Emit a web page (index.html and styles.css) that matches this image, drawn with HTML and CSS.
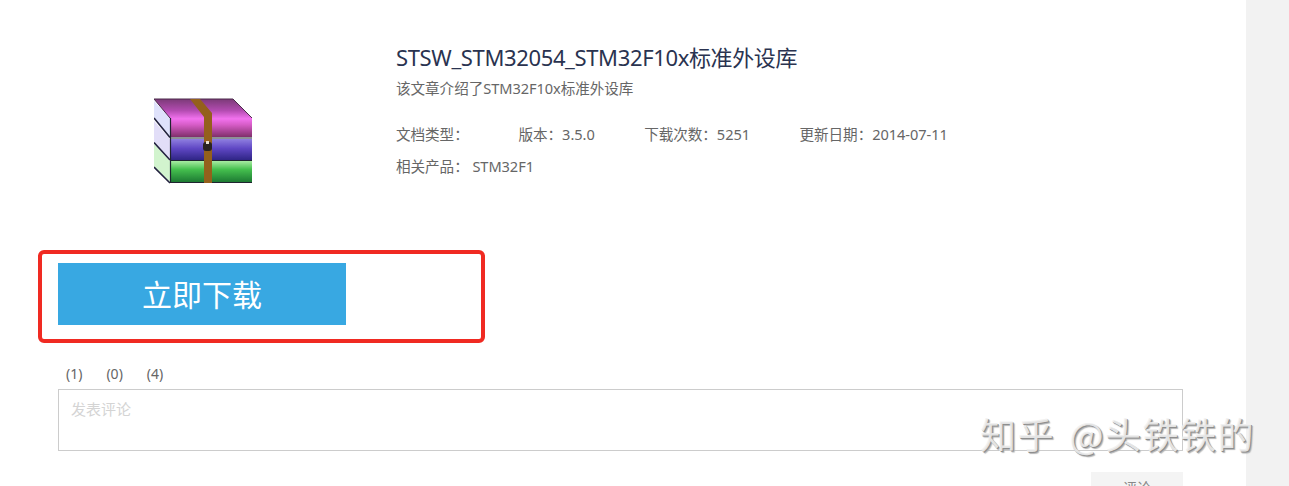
FILE: index.html
```html
<!DOCTYPE html>
<html lang="zh-CN">
<head>
<meta charset="utf-8">
<title>STSW_STM32054</title>
<link rel="stylesheet" href="styles.css">
</head>
<body>
<div class="page">
  <main class="main">
    <section class="head">
      <div class="thumb">
        <svg class="rar" width="100" height="88" viewBox="0 0 100 88" aria-hidden="true">
          <defs>
            <linearGradient id="mag" x1="0" y1="0" x2="0" y2="1">
              <stop offset="0" stop-color="#7c3a78"/>
              <stop offset="0.3" stop-color="#b24bb0"/>
              <stop offset="0.52" stop-color="#f272ee"/>
              <stop offset="0.68" stop-color="#d65cc6"/>
              <stop offset="1" stop-color="#7f2f6b"/>
            </linearGradient>
            <linearGradient id="pur" x1="0" y1="0" x2="0" y2="1">
              <stop offset="0" stop-color="#8f7fe0"/>
              <stop offset="0.45" stop-color="#5f47c4"/>
              <stop offset="1" stop-color="#2f2585"/>
            </linearGradient>
            <linearGradient id="grn" x1="0" y1="0" x2="0" y2="1">
              <stop offset="0" stop-color="#a8eca2"/>
              <stop offset="0.4" stop-color="#45c04e"/>
              <stop offset="1" stop-color="#1d7a33"/>
            </linearGradient>
          </defs>
          <path d="M0 3 L16 20 V39 L0 20Z" fill="#dfe2fb"/>
          <path d="M0 23 L16 41 V61 L0 44Z" fill="#e2def8"/>
          <path d="M0 46 L16 63 V84 L0 69Z" fill="#d2f4ce"/>
          <path d="M0 20 L16 39.5 M0 44.5 L16 62 M0 69 L16 85" stroke="#23233f" stroke-width="1.6" fill="none"/>
          <path d="M0 1 H79 L98 20 V39 H16 V20Z" fill="url(#mag)"/>
          <path d="M0 1 H79 L98 20 M0 1 L16 20" stroke="#4a2b4a" stroke-width="1" fill="none"/>
          <rect x="16" y="41" width="82" height="21" fill="url(#pur)"/>
          <rect x="16" y="63" width="82" height="21" fill="url(#grn)"/>
          <path d="M16 40 H98 M16 62.5 H98 M16 84.5 H98 M16.5 20 V85" stroke="#1f2430" stroke-width="1.2" fill="none"/>
          <path d="M36 1 H46 L58 15 V85 H50 V19Z" fill="#94601c"/>
          <rect x="49" y="44" width="9" height="9" rx="3" fill="#2a2420"/>
          <rect x="52" y="43" width="3" height="3" fill="#e8e0d0"/>
        </svg>
      </div>
      <div class="info">
        <h1 class="title">STSW_STM32054_STM32F10x标准外设库</h1>
        <p class="desc">该文章介绍了STM32F10x标准外设库</p>
        <div class="meta">
          <span class="meta-type">文档类型：</span>
          <span>版本：3.5.0</span>
          <span>下载次数：5251</span>
          <span>更新日期：2014-07-11</span>
        </div>
        <div class="meta meta-second">
          <span>相关产品：&nbsp;STM32F1</span>
        </div>
      </div>
    </section>

    <a class="download">立即下载</a>
    <div class="highlight"></div>

    <div class="counts">
      <span>(1)</span>
      <span>(0)</span>
      <span>(4)</span>
    </div>
    <div class="comment-box">发表评论</div>
    <div class="submit-row">
      <a class="submit">评论</a>
    </div>
  </main>
  <aside class="rail"></aside>
</div>
<div class="watermark">知乎 @头铁铁的</div>
</body>
</html>
```

FILE: styles.css
```css
html, body {
  margin: 0;
  padding: 0;
  height: 486px;
  overflow: hidden;
  background: #fff;
  font-family: "Noto Sans", "Noto Sans CJK SC", sans-serif;
}

.page {
  display: flex;
  height: 486px;
  overflow: hidden;
}

.main {
  flex: 1;
  position: relative;
  padding: 0 63px 0 58px;
  min-width: 0;
}

.rail {
  width: 43px;
  background: #f2f2f2;
}

.head {
  display: flex;
  height: 263px;
}

.thumb {
  width: 338px;
  padding: 98px 0 0 96px;
  box-sizing: border-box;
}

.rar {
  display: block;
  filter: blur(0.4px);
}

.info {
  padding-top: 41px;
}

.title {
  margin: 0;
  font-size: 22px;
  line-height: 32px;
  font-weight: 400;
  letter-spacing: -0.36px;
  color: #2a3350;
}

.desc {
  margin: 5px 0 0;
  font-size: 14.6px;
  line-height: 20px;
  letter-spacing: -0.06px;
  color: #666;
}

.meta {
  display: flex;
  gap: 49.5px;
  margin-top: 26px;
  font-size: 14.6px;
  line-height: 20px;
  letter-spacing: -0.06px;
  color: #666;
  white-space: nowrap;
}

.meta-type {
  width: 73px;
}

.meta-second {
  margin-top: 12px;
}

.download {
  display: block;
  width: 288px;
  height: 62px;
  line-height: 63px;
  text-align: center;
  background: #38a8e2;
  color: #fff;
  font-size: 30px;
}

.highlight {
  position: absolute;
  left: 38px;
  top: 250px;
  width: 447px;
  height: 93px;
  box-sizing: border-box;
  border: 4px solid #f02a22;
  border-radius: 6px;
}

.counts {
  display: flex;
  gap: 24px;
  margin: 39px 0 0 8px;
  font-size: 14px;
  line-height: 20px;
  color: #666;
}

.comment-box {
  height: 62px;
  margin-top: 5px;
  box-sizing: border-box;
  border: 1px solid #ccc;
  padding: 9px 12px;
  font-size: 15px;
  line-height: 20px;
  color: #d4d4d4;
}

.submit-row {
  display: flex;
  justify-content: flex-end;
  margin-top: 21px;
}

.submit {
  width: 92px;
  height: 36px;
  line-height: 32px;
  text-align: center;
  background: #f4f4f4;
  color: #888;
  font-size: 14px;
}

.watermark {
  position: absolute;
  left: 980px;
  top: 408px;
  font-family: "Noto Sans CJK SC", sans-serif;
  font-size: 36px;
  line-height: 50px;
  letter-spacing: 1.5px;
  word-spacing: 5px;
  white-space: nowrap;
  color: rgba(240, 240, 240, 0.9);
  text-shadow: 1px 1px 0 #8e8e8e, 2px 2px 1px #b5b5b5;
}
```
